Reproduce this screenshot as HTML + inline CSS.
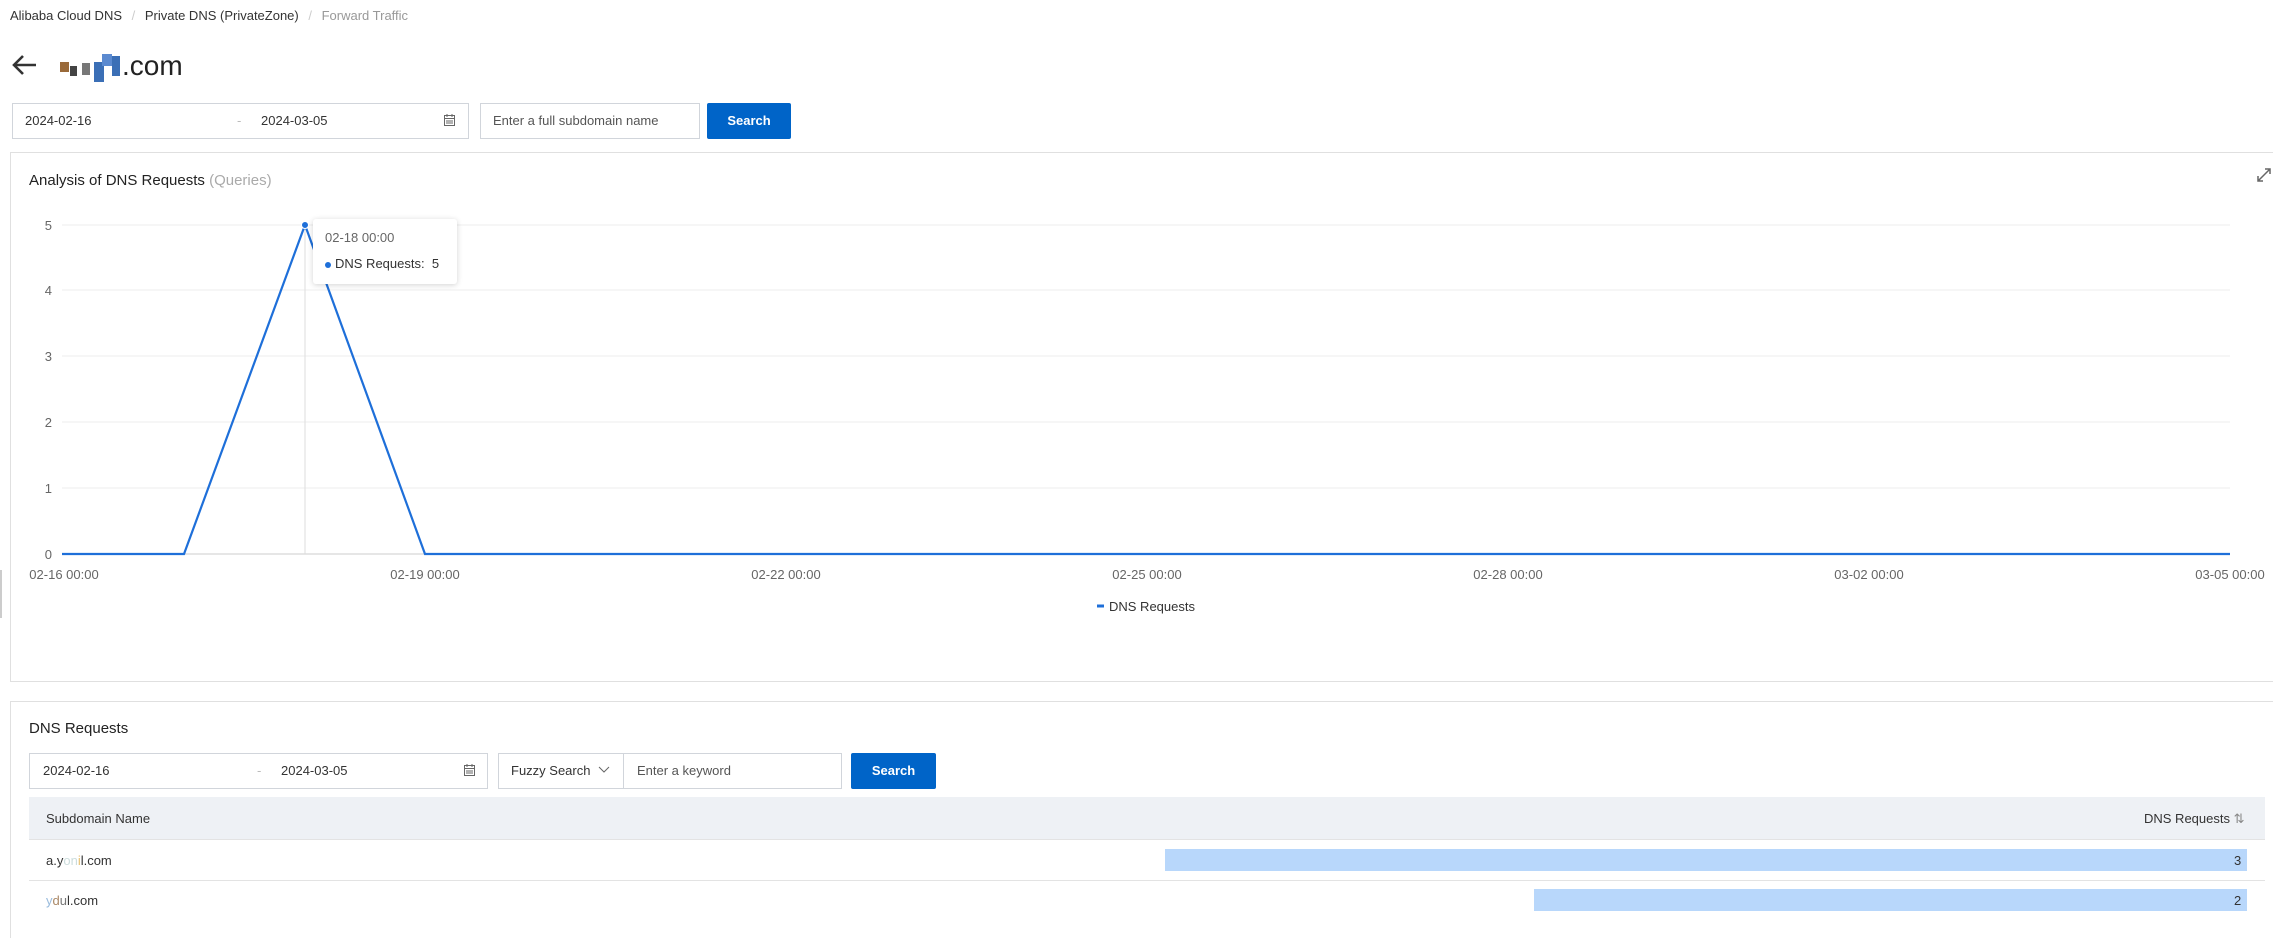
<!DOCTYPE html>
<html style="height:938px;overflow:hidden"><head><meta charset="utf-8"><style>
*{box-sizing:border-box;margin:0;padding:0}
body{width:2273px;height:938px;background:#fff;font-family:"Liberation Sans",sans-serif;color:#333;position:relative;overflow:hidden}
.a{position:absolute;white-space:nowrap}
.box{position:absolute;border:1px solid #d1d5db;background:#fff}
.btn{position:absolute;background:#0064c8;color:#fff;font-size:13px;font-weight:bold;text-align:center;border-radius:2px}
</style></head><body>
<div class="a" style="left:10px;top:8px;font-size:13px;color:#333">Alibaba Cloud DNS <span style="color:#ccc;margin:0 6px">/</span> Private DNS (PrivateZone) <span style="color:#ccc;margin:0 6px">/</span> <span style="color:#999">Forward Traffic</span></div>
<svg class="a" style="left:10px;top:53px" width="28" height="24" viewBox="0 0 28 24"><path d="M26 12H4M13 3L4 12l9 9" stroke="#333" stroke-width="2.6" fill="none"/></svg>
<div class="a" style="left:60px;top:62px;width:9px;height:10px;background:#9a6a3a"></div>
<div class="a" style="left:70px;top:66px;width:7px;height:10px;background:#444"></div>
<div class="a" style="left:82px;top:63px;width:8px;height:12px;background:#777"></div>
<div class="a" style="left:94px;top:62px;width:10px;height:20px;background:#3b6fb6"></div>
<div class="a" style="left:102px;top:54px;width:10px;height:12px;background:#5b8ad0"></div>
<div class="a" style="left:112px;top:56px;width:8px;height:20px;background:#3b6fb6"></div>
<div class="a" style="left:122px;top:50px;font-size:28px;color:#222">.com</div>

<div class="box" style="left:12px;top:103px;width:457px;height:36px"></div>
<div class="a" style="left:25px;top:113px;font-size:13px">2024-02-16</div>
<div class="a" style="left:237px;top:113px;font-size:13px;color:#bbb">-</div>
<div class="a" style="left:261px;top:113px;font-size:13px">2024-03-05</div>
<svg class="a" style="left:444px;top:114px" width="11" height="12"><rect x="0.5" y="1.5" width="10" height="10" fill="none" stroke="#666"/><path d="M0 4.5h11M3 0v3M8 0v3M2 7h7M2 9h7" stroke="#666"/></svg>
<div class="box" style="left:480px;top:103px;width:220px;height:36px"></div>
<div class="a" style="left:493px;top:113px;font-size:13px;color:#555">Enter a full subdomain name</div>
<div class="btn" style="left:707px;top:103px;width:84px;height:36px;line-height:36px">Search</div>

<div class="box" style="left:10px;top:152px;width:2270px;height:530px;border-color:#e0e0e0"></div>
<div class="a" style="left:29px;top:172px;font-size:15px;color:#222">Analysis of DNS Requests <span style="color:#aaa">(Queries)</span></div>
<svg class="a" style="left:2256px;top:165px" width="17" height="18"><path d="M2 16l12-12M9 4h5v5M2 11v5h5" stroke="#666" stroke-width="1.5" fill="none"/></svg>

<svg class="a" style="left:0;top:200px" width="2273" height="430">
<g stroke="#eee"><path d="M62 25H2230M62 90H2230M62 156H2230M62 222H2230M62 288H2230"/></g>
<path d="M62 354H2230" stroke="#ccc"/>
<g font-size="13" fill="#666" text-anchor="end"><text x="52" y="30">5</text><text x="52" y="95">4</text><text x="52" y="161">3</text><text x="52" y="227">2</text><text x="52" y="293">1</text><text x="52" y="359">0</text></g>
<g font-size="13" fill="#666" text-anchor="middle"><text x="64" y="379">02-16 00:00</text><text x="425" y="379">02-19 00:00</text><text x="786" y="379">02-22 00:00</text><text x="1147" y="379">02-25 00:00</text><text x="1508" y="379">02-28 00:00</text><text x="1869" y="379">03-02 00:00</text><text x="2230" y="379">03-05 00:00</text></g>
<path d="M305 25V354" stroke="#ddd"/>
<polyline points="62,354 184,354 305,25 425,354 2230,354" fill="none" stroke="#1e6fd9" stroke-width="2.2"/>
<circle cx="305" cy="25" r="3.5" fill="#1e6fd9" stroke="#fff"/>
<path d="M1097 406h7" stroke="#1e6fd9" stroke-width="3"/>
<text x="1109" y="411" font-size="13" fill="#333">DNS Requests</text>
</svg>
<div class="a" style="left:313px;top:219px;width:144px;height:65px;background:#fff;box-shadow:0 1px 6px rgba(0,0,0,.18);border-radius:3px"></div>
<div class="a" style="left:325px;top:230px;font-size:13px;color:#666">02-18 00:00</div>
<div class="a" style="left:325px;top:256px;font-size:13px;color:#333"><span style="display:inline-block;width:6px;height:6px;border-radius:3px;background:#1e6fd9;vertical-align:middle;margin-right:4px"></span>DNS Requests:&nbsp; 5</div>
<div class="a" style="left:0;top:570px;width:2px;height:48px;background:#ccc"></div>

<div class="box" style="left:10px;top:701px;width:2270px;height:237px;border-color:#e0e0e0;border-bottom:none"></div>
<div class="a" style="left:29px;top:720px;font-size:15px;color:#222">DNS Requests</div>
<div class="box" style="left:29px;top:753px;width:459px;height:36px"></div>
<div class="a" style="left:43px;top:763px;font-size:13px">2024-02-16</div>
<div class="a" style="left:257px;top:763px;font-size:13px;color:#bbb">-</div>
<div class="a" style="left:281px;top:763px;font-size:13px">2024-03-05</div>
<svg class="a" style="left:464px;top:764px" width="11" height="12"><rect x="0.5" y="1.5" width="10" height="10" fill="none" stroke="#666"/><path d="M0 4.5h11M3 0v3M8 0v3M2 7h7M2 9h7" stroke="#666"/></svg>
<div class="box" style="left:498px;top:753px;width:344px;height:36px"></div>
<div class="a" style="left:623px;top:753px;width:1px;height:36px;background:#d1d5db"></div>
<div class="a" style="left:511px;top:763px;font-size:13px">Fuzzy Search</div>
<svg class="a" style="left:598px;top:766px" width="12" height="8"><path d="M1 1l5 5 5-5" stroke="#666" fill="none"/></svg>
<div class="a" style="left:637px;top:763px;font-size:13px;color:#555">Enter a keyword</div>
<div class="btn" style="left:851px;top:753px;width:85px;height:36px;line-height:36px">Search</div>

<div class="a" style="left:29px;top:797px;width:2236px;height:43px;background:#eef1f5;border-bottom:1px solid #e3e3e3"></div>
<div class="a" style="left:46px;top:811px;font-size:13px">Subdomain Name</div>
<div class="a" style="left:2144px;top:811px;font-size:13px">DNS Requests <span style="color:#888">⇅</span></div>
<div class="a" style="left:29px;top:880px;width:2236px;height:1px;background:#e3e3e3"></div>
<div class="a" style="left:1165px;top:849px;width:1082px;height:22px;background:#b8d7fb"></div>
<div class="a" style="left:1534px;top:889px;width:713px;height:22px;background:#b8d7fb"></div>
<div class="a" style="left:2234px;top:853px;font-size:13px">3</div>
<div class="a" style="left:2234px;top:893px;font-size:13px">2</div>
<div class="a" style="left:46px;top:853px;font-size:13px">a.y<span style="color:#cdd">on</span><span style="color:#e8c070">i</span>l.com</div>
<div class="a" style="left:46px;top:893px;font-size:13px"><span style="color:#9bd">y</span><span style="color:#a86">d</span><span style="color:#777">u</span>l.com</div>
</body></html>
